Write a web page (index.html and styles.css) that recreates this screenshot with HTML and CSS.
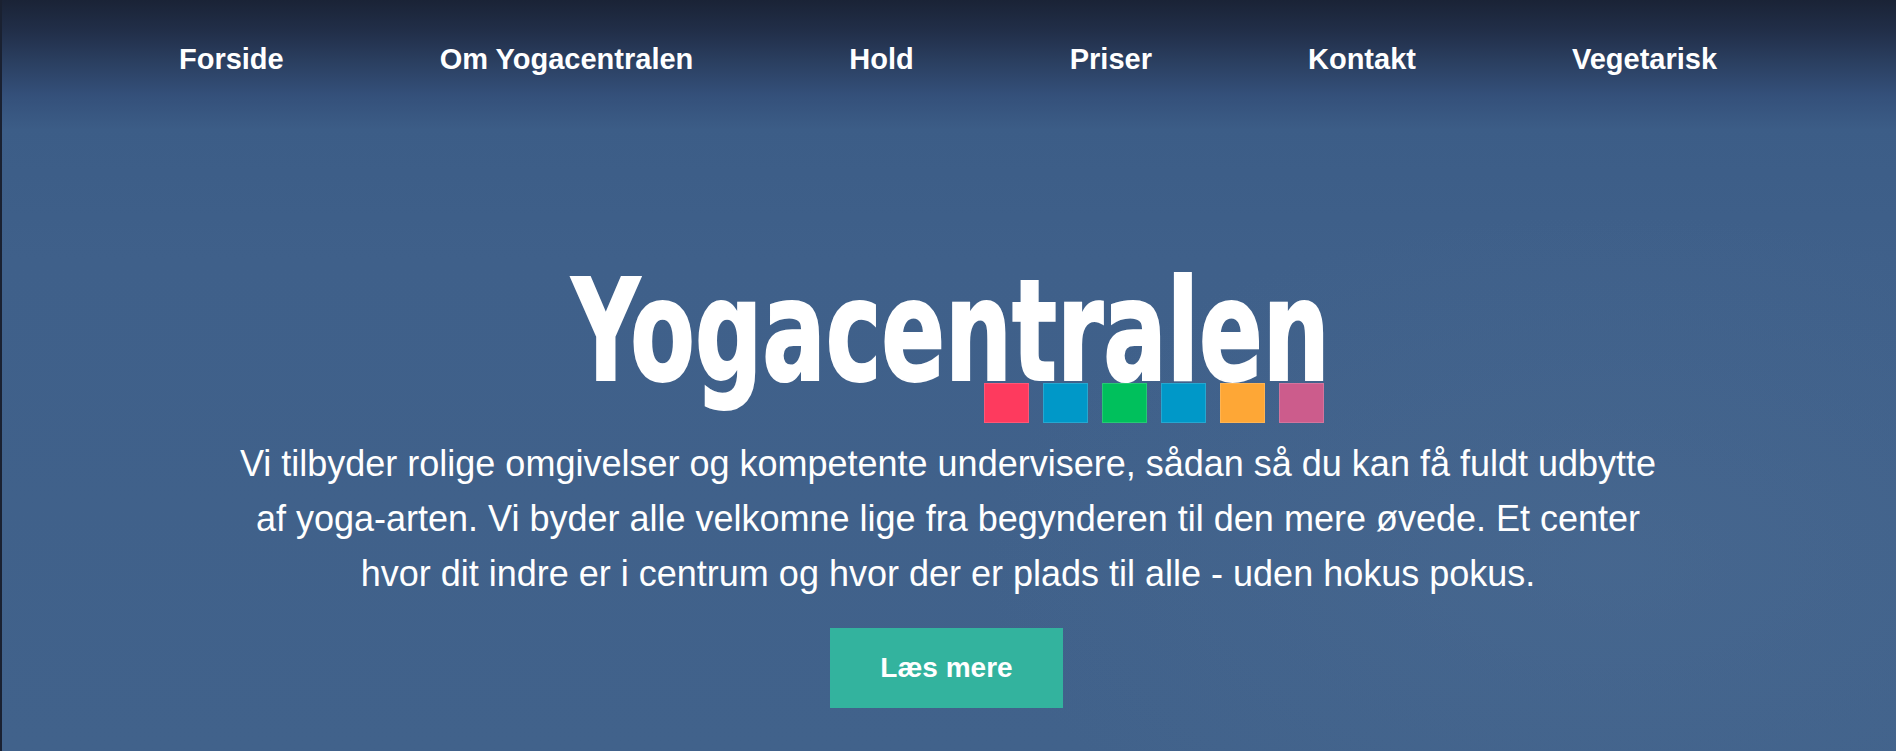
FILE: index.html
```html
<!DOCTYPE html>
<html lang="da">
<head>
<meta charset="utf-8">
<title>Yogacentralen</title>
<link rel="stylesheet" href="styles.css">
</head>
<body>
<div class="page">
  <header class="topbar">
    <nav class="nav">
      <a class="nav-link" href="#">Forside</a>
      <a class="nav-link" href="#">Om Yogacentralen</a>
      <a class="nav-link" href="#">Hold</a>
      <a class="nav-link" href="#">Priser</a>
      <a class="nav-link" href="#">Kontakt</a>
      <a class="nav-link" href="#">Vegetarisk</a>
    </nav>
  </header>
  <main class="hero">
    <div class="logo">
      <h1 class="logo-title">Yogacentralen</h1>
      <div class="logo-squares">
        <span class="sq sq-red"></span>
        <span class="sq sq-blue"></span>
        <span class="sq sq-green"></span>
        <span class="sq sq-blue"></span>
        <span class="sq sq-orange"></span>
        <span class="sq sq-pink"></span>
      </div>
    </div>
    <p class="intro">Vi tilbyder rolige omgivelser og kompetente undervisere, sådan så du kan få fuldt udbytte af yoga-arten. Vi byder alle velkomne lige fra begynderen til den mere øvede. Et center hvor dit indre er i centrum og hvor der er plads til alle - uden hokus pokus.</p>
    <a class="btn" href="#">Læs mere</a>
  </main>
</div>
</body>
</html>
```

FILE: styles.css
```css
html, body {
  margin: 0;
  padding: 0;
  height: 100%;
}

body {
  font-family: "Liberation Sans", Arial, sans-serif;
  color: #fff;
  background: #3f618a;
  overflow: hidden;
}

.page {
  min-height: 751px;
  box-shadow: inset 2px 0 0 #1a2131;
  background:
    radial-gradient(ellipse 900px 500px at 85% 75%, rgba(80, 112, 150, 0.35), rgba(80, 112, 150, 0) 70%),
    linear-gradient(to bottom, #1a2336 0px, #212e48 30px, #2a3e5f 60px, #34507a 95px, #3c5d87 130px, #3f608a 260px, #41628b 751px);
}

.topbar {
  padding-top: 43px;
}

.nav {
  display: flex;
  justify-content: center;
  gap: 156px;
}

.nav-link {
  color: #fff;
  text-decoration: none;
  font-weight: bold;
  font-size: 29px;
  line-height: normal;
}

.hero {
  display: flex;
  flex-direction: column;
  align-items: center;
  padding-top: 202px;
}

.logo {
  width: 751px;
  display: flex;
  flex-direction: column;
  align-items: flex-end;
}

.logo-title {
  margin: 0 -6px 0 0;
  font-family: "DejaVu Sans Condensed", "DejaVu Sans", sans-serif;
  font-weight: bold;
  font-size: 141px;
  line-height: 106px;
  white-space: nowrap;
  -webkit-text-stroke: 2px #fff;
  transform: scaleX(0.741);
  transform-origin: right center;
}

.logo-squares {
  display: flex;
  gap: 14px;
  margin-top: -1px;
}

.sq {
  width: 45px;
  height: 40px;
  box-sizing: border-box;
  border: 1px solid rgba(255, 255, 255, 0.15);
}

.sq-red { background: #fe3a5e; }
.sq-blue { background: #0098c8; }
.sq-green { background: #00c05c; }
.sq-orange { background: #fea736; }
.sq-pink { background: #cc5c8c; }

.intro {
  margin: 13px 0 0;
  max-width: 1440px;
  font-size: 36px;
  line-height: 55px;
  text-align: center;
}

.btn {
  margin: 27px 3px 0 0;
  display: inline-block;
  background: #33b39e;
  color: #fff;
  text-decoration: none;
  font-weight: bold;
  font-size: 28px;
  line-height: 32px;
  padding: 24px 50px;
}
```
